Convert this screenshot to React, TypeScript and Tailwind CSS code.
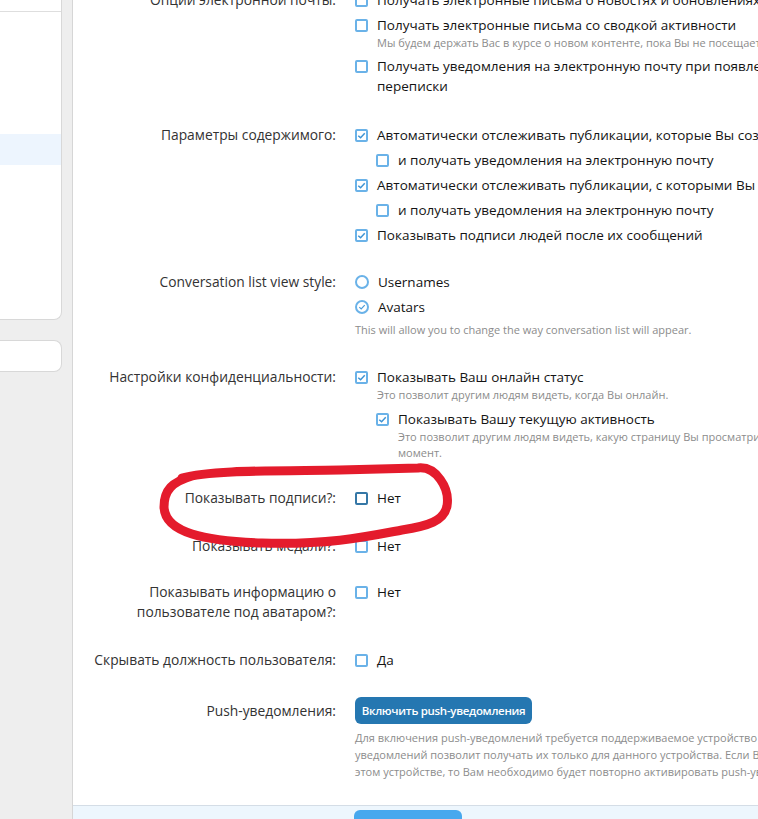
import React from "react";

function Box({ checked = false, dark = false }: { checked?: boolean; dark?: boolean }) {
  return (
    <span className="flex h-[20px] shrink-0 items-center">
      <span
        className={
          dark
            ? "flex h-[13px] w-[13px] items-center justify-center rounded-[2px] border-2 border-[#3577a6] bg-white"
            : "flex h-[13px] w-[13px] items-center justify-center rounded-[2px] border-2 border-[#6ab2e8] bg-white"
        }
      >
        {checked && (
          <svg viewBox="0 0 10 10" className="h-[9px] w-[9px]">
            <path d="M1.4 5.2 L4 7.6 L8.6 2.4" fill="none" stroke="#3d93d4" strokeWidth="1.6" />
          </svg>
        )}
      </span>
    </span>
  );
}

function Radio({ checked = false }: { checked?: boolean }) {
  return (
    <span className="flex h-[20px] shrink-0 items-center">
      <span className="flex h-[14px] w-[14px] items-center justify-center rounded-full border-2 border-[#6ab2e8] bg-white">
        {checked && (
          <svg viewBox="0 0 10 10" className="h-[8px] w-[8px]">
            <path d="M1.6 5.2 L4 7.4 L8.4 2.6" fill="none" stroke="#4a9cd9" strokeWidth="1.5" />
          </svg>
        )}
      </span>
    </span>
  );
}

function Item({
  children,
  checked,
  nested = false,
  radio = false,
  dark = false,
  hint,
}: {
  children: React.ReactNode;
  checked?: boolean;
  nested?: boolean;
  radio?: boolean;
  dark?: boolean;
  hint?: React.ReactNode;
}) {
  return (
    <div className={nested ? "pl-[21px]" : ""}>
      <div className="flex items-start gap-[9px]">
        {radio ? <Radio checked={checked} /> : <Box checked={checked} dark={dark} />}
        <div>
          <div className="whitespace-nowrap text-[13.5px] leading-[20px] text-[#141414]">{children}</div>
          {hint && <div className="text-[11px] leading-[16px] whitespace-nowrap text-[#8c8c8c]">{hint}</div>}
        </div>
      </div>
    </div>
  );
}

function Row({ label, children }: { label: React.ReactNode; children: React.ReactNode }) {
  return (
    <div className="flex">
      <div className="w-[263px] shrink-0 text-right text-[13.8px] leading-[20px] text-[#333333]">{label}</div>
      <div className="ml-[19px] flex flex-col gap-[5px]">{children}</div>
    </div>
  );
}

export default function App() {
  return (
    <div className="relative flex h-[819px] w-[758px] overflow-hidden bg-[#eeeeee] font-['Open_Sans',sans-serif] text-[13px]">
      <aside className="flex w-[62px] shrink-0 flex-col">
        <div className="h-[320px] rounded-br-[8px] border-r border-b border-[#d8d8d8] bg-white">
          <div className="h-[12px] border-b border-[#dedede]" />
          <div className="mt-[122px] h-[31px] bg-[#edf5fe]" />
        </div>
        <div className="mt-[20px] h-[32px] rounded-r-[8px] border border-l-0 border-[#d8d8d8] bg-white" />
      </aside>

      <main className="ml-[10px] flex min-w-0 flex-1 flex-col border-l border-[#d6d6d6] bg-white">
        <div className="flex-1 overflow-hidden">
          <div className="-mt-[10px] flex w-[1000px] flex-col">
            <Row label="Опции электронной почты:">
              <Item>Получать электронные письма о новостях и обновлениях</Item>
              <Item hint="Мы будем держать Вас в курсе о новом контенте, пока Вы не посещаете сайт.">
                Получать электронные письма со сводкой активности
              </Item>
              <Item>
                Получать уведомления на электронную почту при появлении нового
                <br />
                переписки
              </Item>
            </Row>

            <div className="mt-[29px]">
              <Row label="Параметры содержимого:">
                <Item checked>Автоматически отслеживать публикации, которые Вы создаёте</Item>
                <Item nested>и получать уведомления на электронную почту</Item>
                <Item checked>Автоматически отслеживать публикации, с которыми Вы взаимодействуете</Item>
                <Item nested>и получать уведомления на электронную почту</Item>
                <Item checked>Показывать подписи людей после их сообщений</Item>
              </Row>
            </div>

            <div className="mt-[27px]">
              <Row label="Conversation list view style:">
                <Item radio>Usernames</Item>
                <div>
                  <Item radio checked>
                    Avatars
                  </Item>
                  <div className="mt-[5px] text-[11px] leading-[16px] whitespace-nowrap text-[#8c8c8c]">
                    This will allow you to change the way conversation list will appear.
                  </div>
                </div>
              </Row>
            </div>

            <div className="mt-[29px]">
              <Row label="Настройки конфиденциальности:">
                <Item checked hint="Это позволит другим людям видеть, когда Вы онлайн.">
                  Показывать Ваш онлайн статус
                </Item>
                <div className="mt-[1px]">
                  <Item
                    nested
                    checked
                    hint={
                      <>
                        Это позволит другим людям видеть, какую страницу Вы просматриваете в данный
                        <br />
                        момент.
                      </>
                    }
                  >
                    Показывать Вашу текущую активность
                  </Item>
                </div>
              </Row>
            </div>

            <div className="mt-[27px]">
              <Row label="Показывать подписи?:">
                <Item dark>Нет</Item>
              </Row>
            </div>

            <div className="mt-[28px]">
              <Row label="Показывать медали?:">
                <Item>Нет</Item>
              </Row>
            </div>

            <div className="mt-[26px]">
              <Row
                label={
                  <>
                    Показывать информацию о
                    <br />
                    пользователе под аватаром?:
                  </>
                }
              >
                <Item>Нет</Item>
              </Row>
            </div>

            <div className="mt-[28px]">
              <Row label="Скрывать должность пользователя:">
                <Item>Да</Item>
              </Row>
            </div>

            <div className="mt-[27px] flex">
              <div className="w-[263px] shrink-0 pt-[4px] text-right text-[13.8px] leading-[20px] text-[#333333]">
                Push-уведомления:
              </div>
              <div className="ml-[19px]">
                <button className="h-[27px] w-[177px] rounded-[6px] bg-[#2577b1] text-[11.5px] font-semibold tracking-[-0.3px] text-white">
                  Включить push-уведомления
                </button>
                <div className="mt-[5px] text-[11px] leading-[17px] whitespace-nowrap text-[#8c8c8c]">
                  Для включения push-уведомлений требуется поддерживаемое устройство и браузер. Включение
                  <br />
                  уведомлений позволит получать их только для данного устройства. Если Вы выйдете из аккаунта на
                  <br />
                  этом устройстве, то Вам необходимо будет повторно активировать push-уведомления.
                </div>
              </div>
            </div>
          </div>
        </div>

        <footer className="h-[14px] shrink-0 border-t border-[#d4dde6] bg-[#edf6fd] pl-[281px]">
          <div className="mt-[4px] h-[10px] w-[108px] rounded-t-[6px] bg-[#47a8ee]" />
        </footer>
      </main>

      <svg
        className="pointer-events-none absolute left-0 top-0"
        width="758"
        height="819"
        viewBox="0 0 758 819"
      >
        <path
          d="M182 478 C210 470 270 471 340 470 L418 468 C436 466 450 488 447 506 C444 521 428 526 402 530 C370 536 330 545 262 543 C205 541 165 533 164 507 C164 490 172 482 192 476"
          fill="none"
          stroke="#e41b2c"
          strokeWidth="9"
          strokeLinecap="round"
          strokeLinejoin="round"
        />
      </svg>
    </div>
  );
}
